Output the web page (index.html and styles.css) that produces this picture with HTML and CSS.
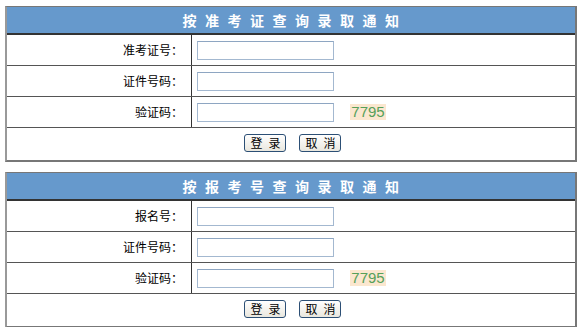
FILE: index.html
```html
<!DOCTYPE HTML>
<html>
<head>
	<title>录取通知查询</title>
	<meta http-equiv="Content-Type" content="text/html; charset=UTF-8">
	<link rel="stylesheet" href="styles.css">
</head>
<body>

	<form class="panel" action="#">
		<div class="title">按准考证查询录取通知</div>
		<div class="row">
			<div class="label">准考证号：</div>
			<div class="field"><input class="text" type="text" name="zkzh"></div>
		</div>
		<div class="row">
			<div class="label">证件号码：</div>
			<div class="field"><input class="text" type="text" name="zjhm"></div>
		</div>
		<div class="row">
			<div class="label">验证码：</div>
			<div class="field"><input class="text" type="text" name="yzm"><span class="captcha">7795</span></div>
		</div>
		<div class="actions">
			<input class="btn" type="button" value="登录">
			<input class="btn" type="button" value="取消">
		</div>
	</form>

	<form class="panel" action="#">
		<div class="title">按报考号查询录取通知</div>
		<div class="row">
			<div class="label">报名号：</div>
			<div class="field"><input class="text" type="text" name="bmh"></div>
		</div>
		<div class="row">
			<div class="label">证件号码：</div>
			<div class="field"><input class="text" type="text" name="zjhm"></div>
		</div>
		<div class="row">
			<div class="label">验证码：</div>
			<div class="field"><input class="text" type="text" name="yzm"><span class="captcha">7795</span></div>
		</div>
		<div class="actions">
			<input class="btn" type="button" value="登录">
			<input class="btn" type="button" value="取消">
		</div>
	</form>

</body>
</html>
```

FILE: styles.css
```css
body {
	margin: 0;
	padding-top: 6px;
	font-family: "Noto Sans CJK SC", "Liberation Sans", sans-serif;
	font-size: 12px;
	color: #000;
	background: #fff;
}

.panel {
	box-sizing: border-box;
	width: 572px;
	height: 156px;
	margin: 0 0 10px 5px;
	border: 1px solid #777;
	border-width: 1px 2px 2px 2px;
	border-left-color: #999;
}

.title {
	box-sizing: border-box;
	height: 28px;
	padding-left: 8px;
	background-color: #6699cc;
	border-bottom: 2px solid #333;
	color: #fff;
	font-size: 14px;
	font-weight: bold;
	letter-spacing: 8.5px;
	line-height: 26px;
	text-align: center;
}

.row {
	box-sizing: border-box;
	display: grid;
	grid-template-columns: 185px 1fr;
	height: 31px;
	border-bottom: 1px solid #555;
}

.label {
	border-right: 1px solid #333;
	padding-right: 8px;
	text-align: right;
	line-height: 30px;
}

.field {
	display: flex;
	align-items: center;
	padding-left: 5px;
}

input.text {
	box-sizing: border-box;
	width: 137px;
	height: 19px;
	margin: 1px 0 0 0;
	padding: 0 2px;
	border: 1px solid #a3b8d0;
	border-top-color: #8ea6c2;
	background: #fff;
}

.captcha {
	display: inline-block;
	width: 36px;
	height: 16px;
	margin-left: 16px;
	background-color: #fbe7cf;
	color: #56a05a;
	font-family: "Liberation Sans", sans-serif;
	font-size: 15px;
	line-height: 16px;
	text-align: center;
}

.actions {
	display: flex;
	justify-content: center;
	align-items: center;
	gap: 13px;
	height: 30px;
	padding-left: 2px;
}

input.btn {
	box-sizing: border-box;
	width: 42px;
	height: 18px;
	margin: 0;
	padding: 0 0 0 6px;
	border: 1px solid #2c4f75;
	border-radius: 3px;
	background: linear-gradient(#ffffff, #e9e7de);
	font-family: "Noto Sans CJK SC", sans-serif;
	font-size: 12px;
	letter-spacing: 6px;
	line-height: 16px;
	color: #000;
}
```
